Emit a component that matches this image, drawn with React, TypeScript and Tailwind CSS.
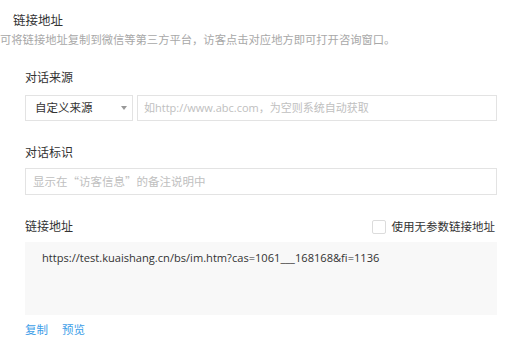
export default function App() {
  return (
    <div className="w-[513px] h-[347px] bg-white overflow-hidden font-['Open_Sans','Noto_Sans_CJK_SC',sans-serif] text-[#333]">
      {/* Header */}
      <div className="pt-[12px] pl-[13px] h-[30px] text-[12.5px] leading-[18px] text-[#333]">链接地址</div>
      <div className="h-[22px] text-[11.3px] leading-[20px] text-[#a8a8a8] whitespace-nowrap">
        可将链接地址复制到微信等第三方平台，访客点击对应地方即可打开咨询窗口。
      </div>

      <div className="pl-[25px] pr-[16px]">
        {/* 对话来源 */}
        <div className="mt-[19px] h-[14px] text-[12px] leading-[14px]">对话来源</div>
        <div className="mt-[10px] flex gap-[4px] h-[26px]">
          <div className="w-[108px] border border-[#e3e3e3] flex items-center justify-between pl-[9px] pr-[5px] text-[11.5px] text-[#333]">
            <span>自定义来源</span>
            <span className="w-0 h-0 border-l-[3px] border-r-[3px] border-t-[4px] border-l-transparent border-r-transparent border-t-[#999]" />
          </div>
          <div className="flex-1 border border-[#e3e3e3] flex items-center pl-[6px] text-[11px] text-[#c0c0c0]">
            如http://www.abc.com，为空则系统自动获取
          </div>
        </div>

        {/* 对话标识 */}
        <div className="mt-[25px] h-[14px] text-[12px] leading-[14px]">对话标识</div>
        <div className="mt-[8px] h-[27px] border border-[#e3e3e3] flex items-center pl-[7px] text-[11.5px] text-[#c0c0c0] font-['Noto_Sans_CJK_SC',sans-serif]">
          显示在“访客信息”的备注说明中
        </div>

        {/* 链接地址 */}
        <div className="mt-[24px] h-[15px] flex items-center justify-between">
          <span className="text-[12px] leading-[14px]">链接地址</span>
          <label className="flex items-center gap-[6px] mr-[2px] text-[11.5px] text-[#333]">
            <span className="w-[14px] h-[14px] border border-[#dcdcdc] rounded-[2px] bg-white" />
            <span>使用无参数链接地址</span>
          </label>
        </div>
        <div className="mt-[8px] h-[73px] bg-[#f8f8f8] pl-[17px] pt-[7px] text-[11.1px] leading-[18px] text-[#333]">
          https://test.kuaishang.cn/bs/im.htm?cas=1061___168168&amp;fi=1136
        </div>

        <div className="mt-[6px] flex gap-[14px] text-[11.5px] text-[#3d9ee8]">
          <span>复制</span>
          <span>预览</span>
        </div>
      </div>
    </div>
  )
}
